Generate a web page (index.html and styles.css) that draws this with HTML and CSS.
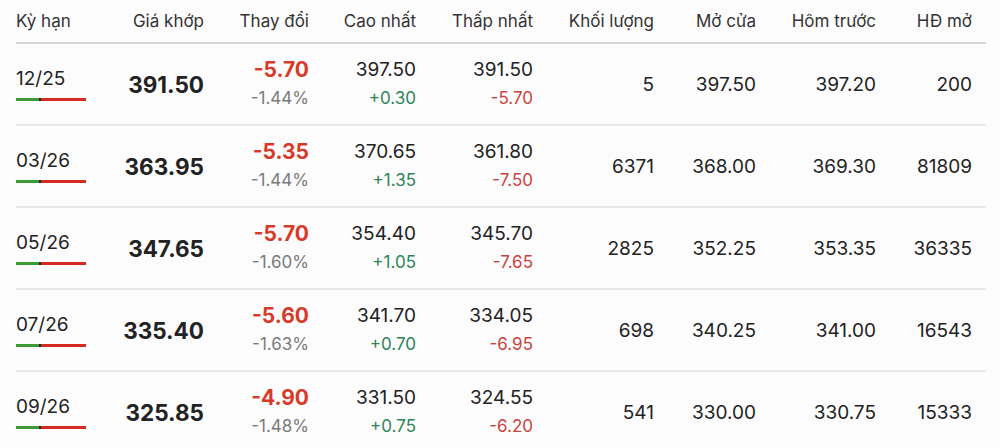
FILE: index.html
```html
<!DOCTYPE html>
<html lang="vi">
<head>
<meta charset="utf-8">
<link rel="stylesheet" href="styles.css">
</head>
<body>
<div class="table">
  <div class="row head">
    <div class="c first">Kỳ hạn</div>
    <div class="c">Giá khớp</div>
    <div class="c">Thay đổi</div>
    <div class="c">Cao nhất</div>
    <div class="c">Thấp nhất</div>
    <div class="c">Khối lượng</div>
    <div class="c">Mở cửa</div>
    <div class="c">Hôm trước</div>
    <div class="c">HĐ mở</div>
  </div>

  <div class="row">
    <div class="c first"><div class="term">12/25</div><div class="bar"><span class="g"></span><span class="k"></span><span class="r"></span></div></div>
    <div class="c price">391.50</div>
    <div class="c stack"><span class="chg">-5.70</span><span class="pct">-1.44%</span></div>
    <div class="c stack"><span class="val">397.50</span><span class="up">+0.30</span></div>
    <div class="c stack"><span class="val">391.50</span><span class="down">-5.70</span></div>
    <div class="c num">5</div>
    <div class="c num">397.50</div>
    <div class="c num">397.20</div>
    <div class="c num">200</div>
  </div>

  <div class="row">
    <div class="c first"><div class="term">03/26</div><div class="bar"><span class="g"></span><span class="k"></span><span class="r"></span></div></div>
    <div class="c price">363.95</div>
    <div class="c stack"><span class="chg">-5.35</span><span class="pct">-1.44%</span></div>
    <div class="c stack"><span class="val">370.65</span><span class="up">+1.35</span></div>
    <div class="c stack"><span class="val">361.80</span><span class="down">-7.50</span></div>
    <div class="c num">6371</div>
    <div class="c num">368.00</div>
    <div class="c num">369.30</div>
    <div class="c num">81809</div>
  </div>

  <div class="row">
    <div class="c first"><div class="term">05/26</div><div class="bar"><span class="g"></span><span class="k"></span><span class="r"></span></div></div>
    <div class="c price">347.65</div>
    <div class="c stack"><span class="chg">-5.70</span><span class="pct">-1.60%</span></div>
    <div class="c stack"><span class="val">354.40</span><span class="up">+1.05</span></div>
    <div class="c stack"><span class="val">345.70</span><span class="down">-7.65</span></div>
    <div class="c num">2825</div>
    <div class="c num">352.25</div>
    <div class="c num">353.35</div>
    <div class="c num">36335</div>
  </div>

  <div class="row">
    <div class="c first"><div class="term">07/26</div><div class="bar"><span class="g"></span><span class="k"></span><span class="r"></span></div></div>
    <div class="c price">335.40</div>
    <div class="c stack"><span class="chg">-5.60</span><span class="pct">-1.63%</span></div>
    <div class="c stack"><span class="val">341.70</span><span class="up">+0.70</span></div>
    <div class="c stack"><span class="val">334.05</span><span class="down">-6.95</span></div>
    <div class="c num">698</div>
    <div class="c num">340.25</div>
    <div class="c num">341.00</div>
    <div class="c num">16543</div>
  </div>

  <div class="row">
    <div class="c first"><div class="term">09/26</div><div class="bar"><span class="g"></span><span class="k"></span><span class="r"></span></div></div>
    <div class="c price">325.85</div>
    <div class="c stack"><span class="chg">-4.90</span><span class="pct">-1.48%</span></div>
    <div class="c stack"><span class="val">331.50</span><span class="up">+0.75</span></div>
    <div class="c stack"><span class="val">324.55</span><span class="down">-6.20</span></div>
    <div class="c num">541</div>
    <div class="c num">330.00</div>
    <div class="c num">330.75</div>
    <div class="c num">15333</div>
  </div>
</div>
</body>
</html>
```

FILE: styles.css
```css
html, body {
  margin: 0;
  padding: 0;
  background: #fdfcfd;
}
body {
  font-family: Inter, "Liberation Sans", sans-serif;
  color: #222;
  overflow: hidden;
}
.table {
  margin-left: 16px;
  width: 970px;
}
.row {
  display: grid;
  grid-template-columns: 84px 104px 105px 107px 117px 121px 102px 120px 96px;
  padding-right: 14px;
  height: 80px;
  border-bottom: 2px solid #e8e6e8;
  align-items: center;
}
.row.head {
  height: 42px;
  border-bottom-color: #d6d6d6;
  font-size: 17px;
  color: #333;
}
.c {
  text-align: right;
  white-space: nowrap;
}
.c.first {
  text-align: left;
}
.term {
  font-size: 19px;
  line-height: 24px;
  color: #222;
}
.bar {
  display: flex;
  margin-top: 7px;
  width: 70px;
  height: 3px;
}
.bar .g { width: 23px; background: #3f9a33; }
.bar .k { width: 2px; background: #222; }
.bar .r { flex: 1; background: #d42a22; }
.price {
  font-size: 22.5px;
  font-weight: 700;
  color: #222;
}
.stack {
  display: flex;
  flex-direction: column;
  align-items: flex-end;
}
.stack span {
  line-height: 28px;
}
.chg {
  font-size: 21px;
  font-weight: 700;
  color: #d63b2a;
}
.pct {
  font-size: 17px;
  color: #7a7a7a;
}
.val {
  font-size: 19px;
  color: #222;
}
.up {
  font-size: 17px;
  color: #2e8456;
}
.down {
  font-size: 17px;
  color: #c9433f;
}
.num {
  font-size: 19px;
  color: #222;
}
```
